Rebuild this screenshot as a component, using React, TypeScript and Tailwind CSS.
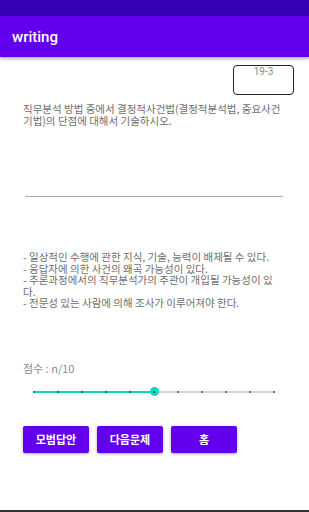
import React from 'react';

const kr = { fontFamily: '"Noto Sans CJK KR", "Noto Sans", sans-serif' };

function ScoreSlider({ value }: { value: number }) {
  const ticks = Array.from({ length: 11 }, (_, i) => i);
  const pct = (value / 10) * 100;
  return (
    <div className="relative ml-[34px] w-[240px] h-[10px]">
      <div className="absolute left-0 right-0 top-[4px] h-[2px] bg-[#d6d6d6]" />
      <div className="absolute left-0 top-[4px] h-[2px] bg-[#03dac5]" style={{ width: `${pct}%` }} />
      {ticks.map((t) => (
        <div
          key={t}
          className="absolute top-[4px] w-[2px] h-[2px] rounded-full bg-[#4a4a4a] -ml-[1px]"
          style={{ left: `${t * 10}%` }}
        />
      ))}
      <div
        className="absolute top-[0.5px] w-[9px] h-[9px] -ml-[4.5px] rounded-full bg-[#03dac5] flex items-center justify-center"
        style={{ left: `${pct}%` }}
      >
        <div className="w-[2px] h-[2px] rounded-full bg-[#3a3a3a]" />
      </div>
    </div>
  );
}

export default function App() {
  const answers = [
    '- 일상적인 수행에 관한 지식, 기술, 능력이 배제될 수 있다.',
    '- 응답자에 의한 사건의 왜곡 가능성이 있다.',
    '- 추론과정에서의 직무분석가의 주관이 개입될 가능성이 있다.',
    '- 전문성 있는 사람에 의해 조사가 이루어져야 한다.',
  ];

  return (
    <div className="w-[309px] h-[512px] bg-white flex flex-col overflow-hidden" style={kr}>
      <div className="h-4 bg-[#3700b3]" />
      <div
        className="h-[41px] bg-[#6200ee] px-3 flex items-center shadow-[0_2px_3px_rgba(0,0,0,0.3)] z-10"
        style={{ fontFamily: 'Roboto, "Noto Sans", sans-serif' }}
      >
        <span className="text-white text-[15px] font-medium mt-[2px]">writing</span>
      </div>

      <div className="flex justify-end pr-[15px] mt-2">
        <div className="w-[61px] h-[30px] border border-[#222] rounded-[4px] flex justify-center">
          <span className="text-[10px] leading-[12px] text-[#8a8a8a]" style={{ fontFamily: 'Roboto, sans-serif' }}>
            19-3
          </span>
        </div>
      </div>

      <p className="mt-[8px] pl-[23px] pr-[24px] text-[10.5px] leading-[12px] text-[#6e6e6e]">
        직무분석 방법 중에서 결정적사건법(결정적분석법, 중요사건 기법)의 단점에 대해서 기술하시오.
      </p>

      <div className="mx-[25px] mt-[69px] w-[258px] border-t border-[#a8a8a8]" />

      <div className="mt-[54px] pl-[23px] pr-[35px] text-[10.5px] leading-[11.6px] text-[#6e6e6e]">
        {answers.map((a) => (
          <p key={a}>{a}</p>
        ))}
      </div>

      <p className="mt-[53px] px-[23px] text-[11px] leading-[13px] text-[#8a8a8a]">점수 : n/10</p>

      <div className="mt-[12px]">
        <ScoreSlider value={5} />
      </div>

      <div className="mt-[29px] px-[23px] flex gap-[8px]">
        {['모범답안', '다음문제', '홈'].map((b) => (
          <button
            key={b}
            className="w-[66px] h-[27px] rounded-[2px] bg-[#6200ee] text-white text-[11px] font-bold shadow-[0_1px_3px_rgba(0,0,0,0.35)]"
          >
            {b}
          </button>
        ))}
      </div>

      <div className="flex-1" />
      <div className="h-[2px] bg-[#333]" />
    </div>
  );
}
